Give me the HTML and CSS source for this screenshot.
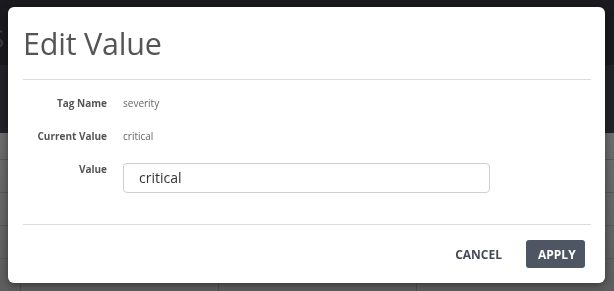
FILE: index.html
```html
<!DOCTYPE html>
<html>
<head>
<meta charset="utf-8">
<link rel="stylesheet" href="styles.css">
</head>
<body>
<div class="app">
  <div class="topbar"><span class="ghost">S</span></div>
  <div class="subbar"></div>
  <div class="table">
    <div class="trow"></div>
    <div class="trow"></div>
    <div class="trow"></div>
    <div class="trow"></div>
    <div class="trow last"><span class="cell">0</span><span class="cell">0</span><span class="cell"></span></div>
  </div>
</div>

<div class="modal">
  <div class="modal-head"><h1 class="title">Edit Value</h1></div>
  <div class="divider"></div>
  <div class="modal-body">
    <div class="frow"><div class="flabel">Tag Name</div><div class="fvalue">severity</div></div>
    <div class="frow"><div class="flabel">Current Value</div><div class="fvalue">critical</div></div>
    <div class="frow input-row"><div class="flabel">Value</div><div class="finput">critical</div></div>
  </div>
  <div class="divider"></div>
  <div class="modal-foot">
    <button class="btn btn-cancel">CANCEL</button>
    <button class="btn btn-apply">APPLY</button>
  </div>
</div>
</body>
</html>
```
FILE: styles.css
```css
html, body {
  margin: 0;
  padding: 0;
  width: 614px;
  height: 291px;
  overflow: hidden;
  font-family: "Open Sans", "Noto Sans", sans-serif;
}
.app {
  display: flex;
  flex-direction: column;
  height: 291px;
  background: #5a5a5a;
}
.topbar {
  height: 70px;
  background: #1b1a1f;
  display: flex;
  align-items: flex-start;
}
.ghost {
  color: #3a3a40;
  font-size: 26px;
  margin: 20px 0 0 -10px;
}
.subbar {
  height: 73px;
  background: #232228;
}
.table {
  flex: 1;
  background: linear-gradient(to bottom, #6d6d6d, #5e5e5e);
  display: flex;
  flex-direction: column;
}
.trow {
  height: 32px;
  border-bottom: 1px solid #585858;
}
.trow:first-child {
  height: 26px;
}
.trow.last {
  display: flex;
  border-bottom: 0;
}
.cell {
  border-left: 1px solid #4e4e4e;
  padding-left: 9px;
  font-size: 12px;
  color: #2a2a2a;
  width: 198px;
  line-height: 28px;
}
.cell:first-child {
  margin-left: 20px;
}

.modal {
  position: fixed;
  left: 8px;
  top: 7px;
  width: 597px;
  height: 276px;
  background: #fff;
  border-radius: 6px;
  box-shadow: 0 2px 8px rgba(0,0,0,0.45);
  display: flex;
  flex-direction: column;
}
.modal-head {
  height: 72px;
  padding-left: 15px;
  display: flex;
  align-items: center;
}
.title {
  margin: 0;
  font-weight: 400;
  font-size: 30.5px;
  color: #555;
  letter-spacing: -0.2px;
}
.divider {
  height: 1px;
  background: #dcdcdc;
  margin: 0 14px 0 15px;
}
.modal-body {
  height: 144px;
  padding-top: 13px;
  box-sizing: border-box;
  display: flex;
  flex-direction: column;
}
.frow {
  display: flex;
  align-items: center;
  height: 19px;
  margin-bottom: 14px;
}
.flabel {
  width: 99px;
  text-align: right;
  font-size: 10px;
  font-weight: 700;
  color: #555;
}
.fvalue {
  margin-left: 16px;
  font-size: 10px;
  color: #666;
}
.input-row {
  align-items: flex-start;
  height: auto;
  margin-top: 2px;
}
.input-row .flabel {
  padding-top: 1px;
}
.finput {
  margin-left: 16px;
  margin-top: 2px;
  width: 367px;
  height: 30px;
  box-sizing: border-box;
  border: 1px solid #cfcfcf;
  border-radius: 4px;
  padding-left: 15px;
  font-size: 14px;
  color: #333;
  line-height: 28px;
}
.modal-foot {
  flex: 1;
  display: flex;
  justify-content: flex-end;
  align-items: center;
  padding-right: 20px;
  gap: 12px;
}
.btn {
  font-family: "Open Sans", "Noto Sans", sans-serif;
  font-weight: 700;
  font-size: 12px;
  border: 0;
  border-radius: 3px;
  height: 28px;
  padding: 0 12px;
  cursor: pointer;
}
.btn-cancel {
  background: transparent;
  color: #454b55;
}
.btn-apply {
  background: #4f5663;
  color: #fff;
  width: 59px;
}
```
